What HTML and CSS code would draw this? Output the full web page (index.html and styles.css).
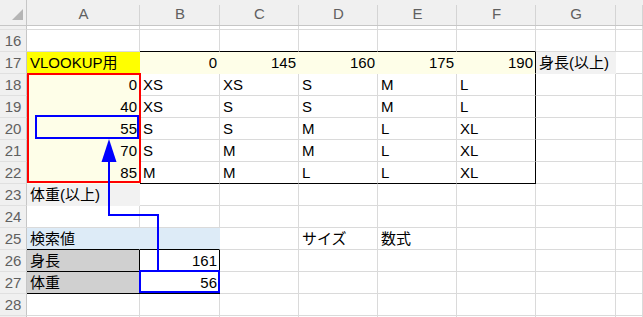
FILE: index.html
```html
<!DOCTYPE html>
<html lang="ja">
<head>
  <meta charset="UTF-8" />
  <title>VLOOKUP サイズ表</title>
  <link rel="stylesheet" href="styles.css">
</head>
<body>

<div class="sheet">
  <div class="row head">
    <div class="corner">
      <svg width="26" height="25" viewBox="0 0 26 25"><polygon points="12,20 23,20 23,9" fill="#b5b5b5"/></svg>
    </div>
    <div class="ch">A</div><div class="ch">B</div><div class="ch">C</div><div class="ch">D</div>
    <div class="ch">E</div><div class="ch">F</div><div class="ch">G</div><div class="ch"></div>
  </div>
  <div class="row gap">
    <div class="rh"></div><div></div><div></div><div></div><div></div><div></div><div></div><div></div><div></div>
  </div>

  <div class="row">
    <div class="rh">16</div>
    <div></div><div class="top"></div><div class="top"></div><div class="top"></div><div class="top"></div><div class="top"></div><div></div><div></div>
  </div>
  <div class="row">
    <div class="rh">17</div>
    <div class="yel">VLOOKUP用</div>
    <div class="lyel num">0</div>
    <div class="lyel num">145</div>
    <div class="lyel num">160</div>
    <div class="lyel num">175</div>
    <div class="lyel num edge">190</div>
    <div class="gray">身長(以上)</div>
    <div></div>
  </div>
  <div class="row">
    <div class="rh">18</div>
    <div class="lyel num">0</div>
    <div>XS</div><div>XS</div><div>S</div><div>M</div><div class="edge">L</div><div></div><div></div>
  </div>
  <div class="row">
    <div class="rh">19</div>
    <div class="lyel num">40</div>
    <div>XS</div><div>S</div><div>S</div><div>M</div><div class="edge">L</div><div></div><div></div>
  </div>
  <div class="row">
    <div class="rh">20</div>
    <div class="lyel num">55</div>
    <div>S</div><div>S</div><div>M</div><div>L</div><div class="edge">XL</div><div></div><div></div>
  </div>
  <div class="row">
    <div class="rh">21</div>
    <div class="lyel num">70</div>
    <div>S</div><div>M</div><div>M</div><div>L</div><div class="edge">XL</div><div></div><div></div>
  </div>
  <div class="row">
    <div class="rh">22</div>
    <div class="lyel num">85</div>
    <div class="top">M</div><div class="top">M</div><div class="top">L</div><div class="top">L</div><div class="top edge">XL</div><div></div><div></div>
  </div>
  <div class="row">
    <div class="rh">23</div>
    <div class="gray">体重(以上)</div>
    <div></div><div></div><div></div><div></div><div></div><div></div><div></div>
  </div>
  <div class="row">
    <div class="rh">24</div>
    <div></div><div></div><div></div><div></div><div></div><div></div><div></div><div></div>
  </div>
  <div class="row">
    <div class="rh">25</div>
    <div class="blue top">検索値</div>
    <div class="blue top"></div>
    <div></div><div>サイズ</div><div>数式</div><div></div><div></div><div></div>
  </div>
  <div class="row">
    <div class="rh">26</div>
    <div class="dark top edge">身長</div>
    <div class="num top edge">161</div>
    <div></div><div></div><div></div><div></div><div></div><div></div>
  </div>
  <div class="row">
    <div class="rh">27</div>
    <div class="dark top edge">体重</div>
    <div class="num top edge">56</div>
    <div></div><div></div><div></div><div></div><div></div><div></div>
  </div>
  <div class="row">
    <div class="rh">28</div>
    <div></div><div></div><div></div><div></div><div></div><div></div><div></div><div></div>
  </div>
  <div class="row">
    <div class="rh"></div>
    <div></div><div></div><div></div><div></div><div></div><div></div><div></div><div></div>
  </div>

  <!-- 参照範囲の枠と矢印 -->
  <svg class="marks" width="643" height="317" viewBox="0 0 643 317">
    <rect x="28" y="74" width="112" height="108" fill="none" stroke="#ff0000" stroke-width="2"/>
    <rect x="36" y="116" width="102" height="22" fill="none" stroke="#0000ff" stroke-width="2"/>
    <rect x="140" y="271" width="79" height="21" fill="none" stroke="#0000ff" stroke-width="2"/>
    <polyline points="109,158 109,215 158,215 158,271" fill="none" stroke="#0000ff" stroke-width="2"/>
    <polygon points="109,139 101.5,162 116.5,162" fill="#0000ff"/>
  </svg>
</div>

</body>
</html>
```

FILE: styles.css
```css
body {
  margin: 0;
  background: #fff;
  overflow: hidden;
  font-family: "Liberation Sans", "Noto Sans CJK JP", sans-serif;
  font-size: 15px;
  color: #000;
}

.sheet {
  position: relative;
  width: 643px;
  height: 317px;
  overflow: hidden;
}

.row {
  display: grid;
  grid-template-columns: 27px 113px 80px 79px 79px 79px 79px 80px 1fr;
  height: 22px;
}

.row > div {
  box-sizing: border-box;
  border-right: 1px solid #dadada;
  border-bottom: 1px solid #dadada;
  padding: 0 3px;
  line-height: 21px;
  white-space: nowrap;
  overflow: hidden;
}

/* 見出し */
.head {
  height: 26px;
  background: #f0f0f0;
}

.head > div {
  border-right: none;
  border-bottom: 1px solid #c6c6c6;
  position: relative;
}

.head .ch {
  text-align: center;
  color: #606060;
  line-height: 22px;
  padding-top: 3px;
}

.head .ch::after {
  content: "";
  position: absolute;
  right: 0;
  top: 5px;
  bottom: 0;
  width: 1px;
  background: #d4d4d4;
}

.corner {
  padding: 0 !important;
}

.corner svg {
  display: block;
}

.head .corner::after {
  content: "";
  position: absolute;
  right: 0;
  top: 0;
  bottom: 0;
  width: 1px;
  background: #c6c6c6;
}

.gap {
  height: 4px;
}

.gap > div {
  line-height: 3px;
}

.rh {
  background: #f0f0f0;
  color: #606060;
  text-align: center;
  padding: 0 !important;
  border-right-color: #c6c6c6 !important;
  border-bottom-color: #e0e0e0 !important;
}

.num {
  text-align: right;
  padding: 0 2px 0 0 !important;
}

/* 塗りつぶし */
.yel {
  background: #ffff00;
  border-color: #ffff00 !important;
}

.lyel {
  background: #fefee8;
  border-color: #fefee8 !important;
}

.gray {
  background: #f2f2f2;
  border-color: #f2f2f2 !important;
}

.blue {
  background: #ddebf7;
  border-color: #ddebf7 !important;
}

.dark {
  background: #d0d0d0;
  border-color: #d0d0d0 !important;
}

/* 罫線 */
.row > .top {
  border-bottom-color: #000 !important;
}

.row > .edge {
  border-right-color: #000 !important;
}

.marks {
  position: absolute;
  left: 0;
  top: 0;
  pointer-events: none;
}
```
